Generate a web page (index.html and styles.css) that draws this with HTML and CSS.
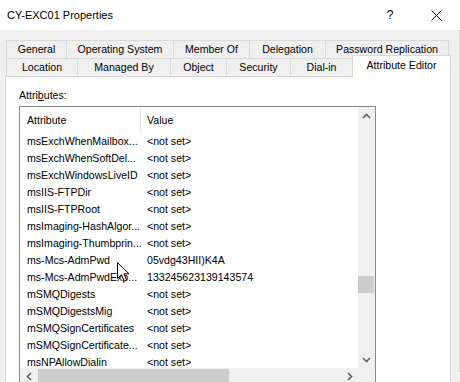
FILE: index.html
```html
<!DOCTYPE html>
<html lang="en">
<head>
    <meta charset="utf-8">
    <title>CY-EXC01 Properties</title>
    <link rel="stylesheet" href="styles.css">
</head>
<body>
    <!-- title bar -->
    <header class="titlebar">
        <span class="title">CY-EXC01 Properties</span>
        <span class="cap-btn help">?</span>
        <span class="cap-btn close">
            <svg width="11" height="11" viewBox="0 0 11 11"><path d="M0.5 0.5 L10.5 10.5 M10.5 0.5 L0.5 10.5" stroke="#000" stroke-width="1" fill="none"/></svg>
        </span>
    </header>

    <main class="dialog">
        <!-- tab strip, two rows -->
        <div class="tab-row row-top">
            <div class="tab">General</div>
            <div class="tab">Operating System</div>
            <div class="tab">Member Of</div>
            <div class="tab">Delegation</div>
            <div class="tab">Password Replication</div>
        </div>
        <div class="tab-row row-bottom">
            <div class="tab">Location</div>
            <div class="tab">Managed By</div>
            <div class="tab">Object</div>
            <div class="tab">Security</div>
            <div class="tab">Dial-in</div>
            <div class="tab active">Attribute Editor</div>
        </div>

        <section class="panel">
            <div class="label">Attri<u>b</u>utes:</div>

            <div class="listbox">
                <div class="list-body">
                    <div class="list-head">
                        <div class="col-attr">Attribute</div>
                        <div class="col-val">Value</div>
                    </div>
                    <div class="row"><div class="col-attr">msExchWhenMailbox...</div><div class="col-val">&lt;not set&gt;</div></div>
                    <div class="row"><div class="col-attr">msExchWhenSoftDel...</div><div class="col-val">&lt;not set&gt;</div></div>
                    <div class="row"><div class="col-attr">msExchWindowsLiveID</div><div class="col-val">&lt;not set&gt;</div></div>
                    <div class="row"><div class="col-attr">msIIS-FTPDir</div><div class="col-val">&lt;not set&gt;</div></div>
                    <div class="row"><div class="col-attr">msIIS-FTPRoot</div><div class="col-val">&lt;not set&gt;</div></div>
                    <div class="row"><div class="col-attr">msImaging-HashAlgor...</div><div class="col-val">&lt;not set&gt;</div></div>
                    <div class="row"><div class="col-attr">msImaging-Thumbprin...</div><div class="col-val">&lt;not set&gt;</div></div>
                    <div class="row"><div class="col-attr">ms-Mcs-AdmPwd</div><div class="col-val">05vdg43HII)K4A</div></div>
                    <div class="row"><div class="col-attr">ms-Mcs-AdmPwdExp...</div><div class="col-val">133245623139143574</div></div>
                    <div class="row"><div class="col-attr">mSMQDigests</div><div class="col-val">&lt;not set&gt;</div></div>
                    <div class="row"><div class="col-attr">mSMQDigestsMig</div><div class="col-val">&lt;not set&gt;</div></div>
                    <div class="row"><div class="col-attr">mSMQSignCertificates</div><div class="col-val">&lt;not set&gt;</div></div>
                    <div class="row"><div class="col-attr">mSMQSignCertificate...</div><div class="col-val">&lt;not set&gt;</div></div>
                    <div class="row"><div class="col-attr">msNPAllowDialin</div><div class="col-val">&lt;not set&gt;</div></div>
                </div>

                <!-- vertical scrollbar -->
                <div class="vscroll">
                    <div class="sb-btn">
                        <svg width="9" height="6" viewBox="0 0 9 6"><path d="M1 5 L4.5 1.5 L8 5" stroke="#606060" stroke-width="1.6" fill="none"/></svg>
                    </div>
                    <div class="sb-track"><div class="v-thumb"></div></div>
                    <div class="sb-btn">
                        <svg width="9" height="6" viewBox="0 0 9 6"><path d="M1 1 L4.5 4.5 L8 1" stroke="#606060" stroke-width="1.6" fill="none"/></svg>
                    </div>
                </div>

                <!-- horizontal scrollbar -->
                <div class="hscroll">
                    <div class="sb-btn">
                        <svg width="6" height="9" viewBox="0 0 6 9"><path d="M5 1 L1.5 4.5 L5 8" stroke="#606060" stroke-width="1.6" fill="none"/></svg>
                    </div>
                    <div class="sb-track"><div class="h-thumb"></div></div>
                    <div class="sb-btn">
                        <svg width="6" height="9" viewBox="0 0 6 9"><path d="M1 1 L4.5 4.5 L1 8" stroke="#606060" stroke-width="1.6" fill="none"/></svg>
                    </div>
                </div>
                <div class="corner"></div>
            </div>
        </section>
    </main>

    <!-- mouse pointer over the list -->
    <svg class="pointer" width="13" height="21" viewBox="0 0 13 21">
        <path d="M0.5 0.5 L0.5 16.5 L4.5 12.7 L7.2 19.2 L9.6 18.2 L7 11.8 L12 11.8 Z" fill="#fff" stroke="#000" stroke-width="1"/>
    </svg>
</body>
</html>
```

FILE: styles.css
```css
/* dialog frame */
body {
    margin: 0;
    width: 460px;
    height: 382px;
    overflow: hidden;
    position: relative;
    background: #f0f0f0;
    font-family: "Liberation Sans", Arial, sans-serif;
    font-size: 10.6px;
    color: #000;
}

.titlebar {
    height: 30px;
    background: #fff;
    display: flex;
    align-items: center;
}

.title {
    padding-left: 7px;
    font-size: 11px;
    flex: 1;
}

.cap-btn {
    width: 46px;
    height: 30px;
    display: flex;
    align-items: center;
    justify-content: center;
    font-size: 12px;
}

.close {
    margin-right: 1px;
}

.dialog {
    padding: 10px 0 0 6px;
    height: 342px;
    border-right: 1px solid #dadada;
    box-sizing: border-box;
    width: 460px;
}

/* tabs */
.tab-row {
    display: flex;
    height: 18px;
}

.tab {
    box-sizing: border-box;
    border-top: 1px solid #d9d9d9;
    border-left: 1px solid #d9d9d9;
    background: #f0f0f0;
    text-align: center;
    line-height: 17px;
    white-space: nowrap;
}

.tab:last-child {
    border-right: 1px solid #d9d9d9;
}

.row-top .tab:nth-child(1) { width: 60px; }
.row-top .tab:nth-child(2) { width: 107px; }
.row-top .tab:nth-child(3) { width: 76px; }
.row-top .tab:nth-child(4) { width: 76px; }
.row-top .tab:nth-child(5) { width: 124px; }

.row-bottom .tab:nth-child(1) { width: 71px; }
.row-bottom .tab:nth-child(2) { width: 93px; }
.row-bottom .tab:nth-child(3) { width: 56px; }
.row-bottom .tab:nth-child(4) { width: 64px; }
.row-bottom .tab:nth-child(5) { width: 62px; }

.tab.active {
    width: 99px;
    height: 22px;
    margin-top: -3px;
    background: #fff;
    position: relative;
    z-index: 1;
    line-height: 18px;
}

/* tab page */
.panel {
    margin-left: -1px;
    width: 446px;
    height: 320px;
    box-sizing: border-box;
    border: 1px solid #d9d9d9;
    background: #fff;
    padding: 11px 0 0 13px;
}

.label {
    line-height: 14px;
    margin-bottom: 4px;
}

.listbox {
    width: 357px;
    box-sizing: border-box;
    border: 1px solid #828790;
    border-bottom: none;
    display: grid;
    grid-template-columns: 1fr 17px;
    grid-template-rows: 261px 17px;
}

.list-body {
    overflow: hidden;
}

.list-head {
    display: flex;
    height: 26px;
    line-height: 26px;
}

.list-head .col-attr {
    border-right: 1px solid #e5e5e5;
}

.row {
    display: flex;
    height: 17px;
    line-height: 17px;
}

.col-attr {
    width: 121px;
    box-sizing: border-box;
    padding-left: 7px;
    white-space: nowrap;
}

.col-val {
    padding-left: 6px;
    white-space: nowrap;
}

/* scrollbars */
.vscroll,
.hscroll,
.corner {
    background: #f0f0f0;
}

.vscroll {
    display: flex;
    flex-direction: column;
}

.hscroll {
    display: flex;
}

.sb-btn {
    width: 17px;
    height: 17px;
    display: flex;
    align-items: center;
    justify-content: center;
    flex: none;
}

.sb-track {
    flex: 1;
}

.v-thumb {
    margin: 152px 1px 0 0;
    height: 17px;
    background: #cdcdcd;
}

.h-thumb {
    margin: 1px 0 0 1px;
    width: 191px;
    height: 15px;
    background: #cdcdcd;
}

.pointer {
    position: absolute;
    left: 117px;
    top: 262px;
}
```
